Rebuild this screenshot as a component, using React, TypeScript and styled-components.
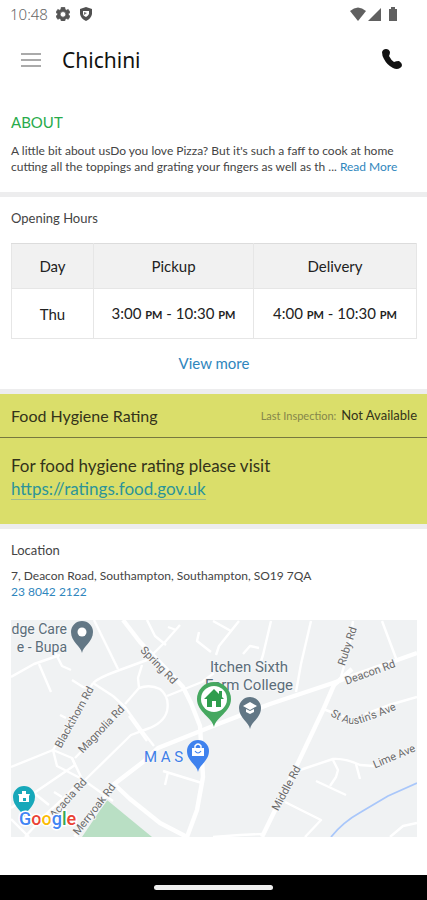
import React from "react";
import styled, { createGlobalStyle } from "styled-components";

const Global = createGlobalStyle`
  * { box-sizing: border-box; }
  body { margin: 0; background: #fff; font-family: Lato, "Liberation Sans", sans-serif; color: #333; }
  h1, h2, p { margin: 0; font-weight: 400; }
`;

const Page = styled.div`
  min-height: 100vh;
  display: flex;
  flex-direction: column;
`;

const StatusBar = styled.div`
  height: 28px;
  padding: 0 26px 0 10px;
  display: flex;
  justify-content: space-between;
  align-items: center;
`;

const StatusGroup = styled.div<{ $gap: number }>`
  display: flex;
  align-items: center;
  gap: ${(p) => p.$gap}px;
`;

const Clock = styled.span`
  font: 300 15px/20px "Noto Sans", sans-serif;
  color: #666;
`;

const AppBar = styled.header`
  height: 64px;
  padding: 0 24px 0 20px;
  display: flex;
  align-items: center;
`;

const IconButton = styled.button`
  border: 0;
  padding: 0;
  background: none;
  display: flex;
  color: #111;
`;

const AppTitle = styled.h1`
  flex: 1;
  margin-left: 20px;
  font: 400 21px/28px "Noto Sans", sans-serif;
  color: #111;
`;

const Section = styled.section<{ $top: number; $bottom: number; $last?: boolean }>`
  padding: ${(p) => p.$top}px 10px ${(p) => p.$bottom}px 11px;
  border-bottom: ${(p) => (p.$last ? 0 : 5)}px solid #ededee;
`;

const AboutTitle = styled.h2`
  font-size: 15px;
  line-height: 20px;
  color: #28ab4b;
  margin-bottom: 11px;
`;

const SectionTitle = styled.h2<{ $gap: number }>`
  font-size: 13px;
  line-height: 18px;
  color: #444;
  margin-bottom: ${(p) => p.$gap}px;
`;

const Body = styled.p`
  font-size: 12px;
  line-height: 16px;
  color: #444;
`;

const Link = styled.a`
  color: #2f86bd;
  text-decoration: none;
`;

const Hours = styled.table`
  width: 100%;
  border-collapse: collapse;
  font-size: 15px;
  line-height: 20px;
  text-align: center;
  color: #222;
  th, td { border: 1px solid #e6e6e6; padding: 0; font-weight: 400; }
  th { height: 45px; background: #f1f1f1; border-top-color: #dcdcdc; }
  td { height: 50px; }
  th:first-child { width: 82px; }
  th:last-child { width: 163px; }
`;

const Meridiem = styled.span`
  font-size: 11px;
  font-weight: 700;
`;

const ViewMore = styled(Link)`
  display: block;
  margin-top: 14px;
  font-size: 15px;
  line-height: 20px;
  text-align: center;
`;

const Hygiene = styled.section`
  background: #dade6a;
  color: #33331a;
  border-bottom: 5px solid #ededee;
`;

const HygieneHead = styled.div`
  height: 44px;
  padding: 0 10px 0 11px;
  display: flex;
  align-items: center;
  justify-content: space-between;
  border-bottom: 1px solid #77783f;
`;

const HygieneTitle = styled.h2`
  font-size: 16px;
  line-height: 20px;
`;

const Inspection = styled.div`
  display: flex;
  align-items: baseline;
  gap: 5px;
  font-size: 13px;
  line-height: 18px;
`;

const InspectionLabel = styled.span`
  font-size: 11px;
  color: #85864a;
`;

const HygieneBody = styled.p`
  padding: 16px 10px 24px 11px;
  font-size: 17px;
  line-height: 23px;
  a { color: #2b9499; border-bottom: 1px solid #a0bc8c; }
`;

const Line = styled.span`
  display: block;
`;

const Map = styled.svg`
  display: block;
  width: 100%;
  height: auto;
  margin-top: 20px;
  font-family: Roboto, sans-serif;
`;

const NavBar = styled.footer`
  margin-top: auto;
  height: 25px;
  background: #000;
  display: flex;
  align-items: center;
  justify-content: center;
`;

const HomePill = styled.span`
  width: 28%;
  height: 5px;
  border-radius: 3px;
  background: #eee;
`;

const Time = ({ from, to }: { from: string; to: string }) => (
  <>
    {from} <Meridiem>PM</Meridiem> - {to} <Meridiem>PM</Meridiem>
  </>
);

const minorRoads = [
  "M11 677 L34 664 60 655",
  "M39 664 L51 692",
  "M55 652 L62 666 71 670",
  "M94 620 L118 669",
  "M93 683 Q98 678 117 671 L147 660 165 642 180 625",
  "M93 683 L113 696 125 707 143 732 154 746",
  "M93 683 L53 750 57 766 82 779",
  "M72 680 L83 687 91 688",
  "M11 767 L53 750 72 758 82 779",
  "M72 758 L75 765 34 793 11 808",
  "M60 715 L66 718",
  "M125 704 L139 688 Q150 684 160 689 Q170 697 167 711 Q164 723 147 729 L131 735 84 781",
  "M139 688 L138 678 142 665",
  "M129 716 L147 741",
  "M120 711 L75 758",
  "M167 696 L182 690 202 682 214 673",
  "M147 620 L155 636 166 645",
  "M176 630 L168 627",
  "M199 632 L197 641 211 652",
  "M213 621 L231 631",
  "M239 621 L219 646 216 655",
  "M271 621 L263 655 258 670",
  "M243 654 L250 646 259 648",
  "M311 621 L301 664 296 692",
  "M353 621 L349 649 340 680",
  "M382 621 L397 661",
  "M323 709 L345 717 M365 714 L389 705 417 697",
  "M300 770 L333 759 Q345 758 360 765 L374 766",
  "M333 760 L338 770 336 777 330 786",
  "M316 781 L346 795",
  "M356 764 L360 779",
  "M285 802 L321 820 305 837",
  "M390 837 L403 826 417 823",
  "M163 771 L202 783 M168 772 L165 785",
  "M82 779 L113 801",
  "M82 779 L67 795 43 817 25 837",
  "M11 819 L29 837",
  "M54 792 L62 797 M34 793 L49 805",
  "M213 837 L240 835 263 834",
];

const majorRoads = [
  "M417 653 L333 683 270 704 213 726 158 748 143 762 113 785 75 837",
  "M123 620 L140 642 171 674 183 687 191 703 200 726 203 777 197 810 187 837",
  "M352 669 L334 685 324 708 297 765 262 837",
  "M114 784 L130 799 160 823 187 837",
];

const labels: [string, number, number, number][] = [
  ["Spring Rd", 159, 665, 46],
  ["Blackthorn Rd", 74, 717, -61],
  ["Magnolia Rd", 101, 729, -46],
  ["Acacia Rd", 68, 798, -48],
  ["Merryoak Rd", 94, 809, -52],
  ["Ruby Rd", 347, 646, -72],
  ["Deacon Rd", 370, 672, -20],
  ["Lime Ave", 394, 756, -23],
  ["Middle Rd", 286, 788, -62],
];

const Pin = ({ x, y, fill, children }: { x: number; y: number; fill: string; children?: React.ReactNode }) => (
  <g transform={`translate(${x} ${y})`}>
    <path d="M0 21 C-1 14 -11 10 -11 0 A11 11 0 1 1 11 0 C11 10 1 14 0 21Z" fill={fill} />
    {children}
  </g>
);

const LocationMap = () => (
  <Map viewBox="11 620 406 217" role="img" aria-label="Map of 7, Deacon Road">
    <rect x="11" y="620" width="406" height="217" fill="#f0f2f3" />
    <path d="M107 800 L152 837 H82Z" fill="#b9dfc4" />
    <g fill="none" stroke="#fff" strokeLinejoin="round">
      {minorRoads.map((d) => <path key={d} d={d} strokeWidth="2.4" />)}
      {majorRoads.map((d) => <path key={d} d={d} strokeWidth="4.4" />)}
    </g>
    <path d="M331 837 Q343 822 361 812 L388 796 417 783" fill="none" stroke="#a9c7fa" strokeWidth="1.8" />
    <g fontSize="11" fill="#6a6a6a" stroke="#f5f6f7" strokeWidth="2" paintOrder="stroke" textAnchor="middle">
      {labels.map(([t, x, y, r]) => (
        <text key={t} transform={`translate(${x} ${y}) rotate(${r})`} y="4">{t}</text>
      ))}
      <path id="st-austins" d="M330 715 Q347 727 361 723 T400 708" fill="none" stroke="none" />
      <text textAnchor="start"><textPath href="#st-austins">St Austin's Ave</textPath></text>
    </g>
    <g fontSize="14" fill="#5b6d7a" stroke="#f5f6f7" strokeWidth="2" paintOrder="stroke">
      <text x="67" y="634" textAnchor="end">dge Care</text>
      <text x="67" y="652" textAnchor="end">e - Bupa</text>
      <text x="249" y="672" fontSize="15" textAnchor="middle">Itchen Sixth</text>
      <text x="249" y="690" fontSize="15" textAnchor="middle">Farm College</text>
      <text x="144" y="762" fontSize="15" fill="#3f7fe8">M A S</text>
    </g>
    <Pin x={82} y={632} fill="#627785"><circle r="4.5" fill="#fff" /></Pin>
    <Pin x={250} y={708} fill="#627785">
      <path d="M-7 -2 L0 -6 7 -2 0 2Z M-4 1 L0 3 4 1 V4 L0 6 -4 4Z" fill="#fff" />
    </Pin>
    <Pin x={198} y={751} fill="#3f82ee">
      <path d="M-6 -3 H6 V5 H-6Z" fill="#fff" />
      <path d="M-3 -3 V-5 Q0 -9 3 -5 V-3" fill="none" stroke="#fff" strokeWidth="1.4" />
      <path d="M-3 0 Q0 4 3 0" fill="none" stroke="#3f82ee" strokeWidth="1.2" />
    </Pin>
    <Pin x={24} y={797} fill="#17a8ba">
      <path d="M-6 -3 H-2 V-6 H2 V-3 H6 L5 -1 V5 H-5 V-1Z" fill="#fff" />
      <rect x="-1" y="1" width="3" height="3" fill="#17a8ba" />
    </Pin>
    <g transform="translate(214 699)">
      <path d="M0 28 C-2 18 -17 13 -17 0 A17 17 0 1 1 17 0 C17 13 2 18 0 28Z" fill="#46a860" />
      <circle r="13" fill="#fff" />
      <path d="M-10 0 L0 -10 5 -5 V-8 H8 V-2 L10 0 H7 V8 H2 V2 H-2 V8 H-7 V0Z" fill="#2f9d4d" />
    </g>
    <text x="19" y="825" fontSize="18" fontWeight="500" stroke="#fff" strokeWidth="3" paintOrder="stroke">
      <tspan fill="#4285f4">G</tspan><tspan fill="#ea4335">o</tspan><tspan fill="#fbbc05">o</tspan>
      <tspan fill="#4285f4">g</tspan><tspan fill="#34a853">l</tspan><tspan fill="#ea4335">e</tspan>
    </text>
  </Map>
);

export default function App() {
  return (
    <Page>
      <Global />
      <StatusBar>
        <StatusGroup $gap={8}>
          <Clock>10:48</Clock>
          <svg width="14" height="14" viewBox="2 2 20 20" fill="#555" aria-hidden="true">
            <path fillRule="evenodd" stroke="#555" strokeWidth="1" d="M9.500 2.500h5l.5 3 2 1 2.500-1 2.500 4.300-2.300 2v1.400l2.300 2-2.500 4.300-2.500-1-2 1-.5 2.500h-5l-.5-2.500-2-1-2.500 1L2 15.200l2.300-2v-1.400L2 9.800l2.500-4.300 2.500 1 2-1ZM12 8.500a4 4 0 1 0 0 8 4 4 0 0 0 0-8Z" />
          </svg>
          <svg width="16" height="16" viewBox="0 0 16 16" aria-hidden="true">
            <path d="M8 1 L14 3 V8 Q13 13 8 15 Q3 13 2 8 V3Z" fill="#505050" />
            <path d="M5 5 H11 V8 Q10 10 8 11 Q5 10 5 8Z" fill="#fff" />
            <path d="M6 6 L9 7 6 9Z" fill="#777" />
          </svg>
        </StatusGroup>
        <StatusGroup $gap={2}>
          <svg width="16" height="14" viewBox="0 0 16 14" aria-hidden="true"><path d="M0 4 Q8 -3 16 4 L8 14Z" fill="#606060" /></svg>
          <svg width="13" height="13" viewBox="0 0 13 13" aria-hidden="true"><path d="M13 0 V13 H0Z" fill="#606060" /></svg>
          <svg width="18" height="14" viewBox="0 0 18 14" aria-hidden="true"><path d="M6 2 H8 V0 H12 V2 H14 V14 H6Z" fill="#606060" /></svg>
        </StatusGroup>
      </StatusBar>

      <AppBar>
        <IconButton aria-label="Menu">
          <svg width="22" height="16" viewBox="0 0 22 16"><path d="M1 2 H21 M1 8 H21 M1 14 H21" stroke="#aaa" strokeWidth="2" /></svg>
        </IconButton>
        <AppTitle>Chichini</AppTitle>
        <IconButton aria-label="Call">
          <svg width="22" height="24" viewBox="0 0 22 24" fill="currentColor">
            <path d="M1 4 Q2 1 5 1 Q8 1 9 4 Q9 6 8 8 Q10 12 13 14 Q15 13 18 13 Q21 15 21 17 Q21 19 19 20 Q16 22 12 20 Q6 17 3 11 Q1 8 1 4Z" />
          </svg>
        </IconButton>
      </AppBar>

      <Section $top={20} $bottom={17}>
        <AboutTitle>ABOUT</AboutTitle>
        <Body>
          A little bit about usDo you love Pizza? But it's such a faff to cook at home cutting all the toppings and
          grating your fingers as well as th ... <Link href="#about">Read More</Link>
        </Body>
      </Section>

      <Section $top={12} $bottom={16}>
        <SectionTitle $gap={16}>Opening Hours</SectionTitle>
        <Hours>
          <thead>
            <tr><th scope="col">Day</th><th scope="col">Pickup</th><th scope="col">Delivery</th></tr>
          </thead>
          <tbody>
            <tr>
              <td>Thu</td>
              <td><Time from="3:00" to="10:30" /></td>
              <td><Time from="4:00" to="10:30" /></td>
            </tr>
          </tbody>
        </Hours>
        <ViewMore href="#hours">View more</ViewMore>
      </Section>

      <Hygiene>
        <HygieneHead>
          <HygieneTitle>Food Hygiene Rating</HygieneTitle>
          <Inspection><InspectionLabel>Last Inspection:</InspectionLabel>Not Available</Inspection>
        </HygieneHead>
        <HygieneBody>
          <Line>For food hygiene rating please visit</Line>
          <Link href="https://ratings.food.gov.uk">https://ratings.food.gov.uk</Link>
        </HygieneBody>
      </Hygiene>

      <Section $top={12} $bottom={20} $last>
        <SectionTitle $gap={9}>Location</SectionTitle>
        <Body>
          <Line>7, Deacon Road, Southampton, Southampton, SO19 7QA</Line>
          <Link href="tel:2380422122">23 8042 2122</Link>
        </Body>
        <LocationMap />
      </Section>

      <NavBar><HomePill /></NavBar>
    </Page>
  );
}
